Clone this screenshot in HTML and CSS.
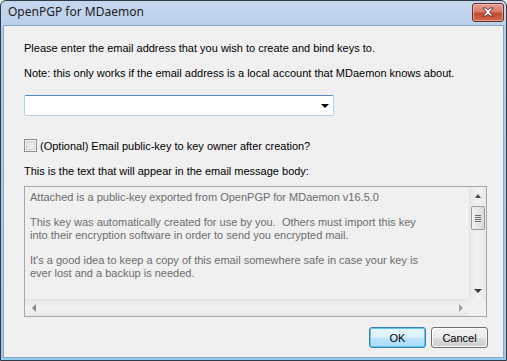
FILE: index.html
```html
<!DOCTYPE html>
<html>

<head>
	<title>OpenPGP for MDaemon</title>
	<meta charset=utf-8>
	<link rel="stylesheet" href="styles.css">
</head>

<body>
	<div class="window">
		<div class="titlebar">
			<div class="title">OpenPGP for MDaemon</div>
			<div class="close">
				<svg width="16" height="10" viewBox="0 0 16 10">
					<path d="M3 1 L6 1 L8 3 L10 1 L13 1 L9.5 5 L13 9 L10 9 L8 7 L6 9 L3 9 L6.5 5 Z" fill="#fff" stroke="#5a2219" stroke-width="0.8" stroke-linejoin="round" />
				</svg>
			</div>
		</div>
		<div class="client">
			<p class="line first">Please enter the email address that you wish to create and bind keys to.</p>
			<p class="line second">Note: this only works if the email address is a local account that MDaemon knows about.</p>
			<div class="combo">
				<div class="combo-arrow"></div>
			</div>
			<label class="check-row">
				<span class="checkbox"></span>
				<span>(Optional) Email public-key to key owner after creation?</span>
			</label>
			<p class="line body-label">This is the text that will appear in the email message body:</p>
			<div class="memo">
				<div class="memo-text">
					<div>Attached is a public-key exported from OpenPGP for MDaemon v16.5.0</div>
					<div>&nbsp;</div>
					<div>This key was automatically created for use by you.&nbsp; Others must import this key</div>
					<div>into their encryption software in order to send you encrypted mail.</div>
					<div>&nbsp;</div>
					<div>It's a good idea to keep a copy of this email somewhere safe in case your key is</div>
					<div>ever lost and a backup is needed.</div>
				</div>
				<div class="vscroll">
					<div class="sb-btn"><span class="tri up"></span></div>
					<div class="vtrack">
						<div class="thumb">
							<span></span><span></span><span></span><span></span>
						</div>
					</div>
					<div class="sb-btn"><span class="tri down"></span></div>
				</div>
				<div class="hscroll">
					<div class="sb-btn"><span class="tri left"></span></div>
					<div class="htrack"></div>
					<div class="sb-btn"><span class="tri right"></span></div>
				</div>
				<div class="corner"></div>
			</div>
			<div class="buttons">
				<button class="btn default">OK</button>
				<button class="btn">Cancel</button>
			</div>
		</div>
	</div>
</body>

</html>
```

FILE: styles.css
```css
body {
	margin: 0;
	background: #f0f0f0;
	font-family: "Liberation Sans", Arial, sans-serif;
	font-size: 11px;
	color: #000;
}

.window {
	width: 507px;
	height: 361px;
	box-sizing: border-box;
	border: 1px solid #2f3a48;
	border-radius: 6px 6px 0 0;
	background: linear-gradient(#c6d8ee, #b7cde7 30px, #a9c3e2);
	display: flex;
	flex-direction: column;
	padding: 0 2px 2px 2px;
	box-shadow: inset 0 -2px 0 #8fcdee;
}

.titlebar {
	height: 24px;
	display: flex;
	align-items: center;
	justify-content: space-between;
	padding: 0 0 0 5px;
	flex-shrink: 0;
}

.title {
	font-family: "Noto Sans", "Open Sans", sans-serif;
	font-size: 12px;
	color: #1b1b1b;
	margin-top: -4px;
}

.close {
	width: 30px;
	height: 17px;
	margin-top: -2px;
	border: 1px solid #6a2c24;
	border-radius: 3px;
	background: linear-gradient(#e6a193, #d57a66 45%, #c34a33 55%, #cf6a50);
	display: flex;
	align-items: center;
	justify-content: center;
	box-shadow: inset 0 0 0 1px rgba(255, 220, 210, 0.5);
}

.close svg {
	display: block;
}

.client {
	flex: 1;
	background: #f0f0f0;
	border: 1px solid #8aa6c8;
	padding: 0 15px 0 20px;
	display: flex;
	flex-direction: column;
}

.line {
	margin: 0;
	line-height: 13px;
	white-space: nowrap;
}

.first {
	margin-top: 16px;
}

.second {
	margin-top: 12px;
}

.combo {
	margin-top: 15px;
	width: 310px;
	height: 21px;
	box-sizing: border-box;
	background: #fff;
	border: 1px solid #b4d1ea;
	border-top-color: #5a8dbb;
	border-radius: 2px;
	position: relative;
}

.combo-arrow {
	position: absolute;
	right: 4px;
	top: 8px;
	border-left: 4px solid transparent;
	border-right: 4px solid transparent;
	border-top: 4px solid #000;
}

.check-row {
	margin-top: 23px;
	display: flex;
	align-items: center;
	gap: 3px;
	height: 13px;
}

.checkbox {
	width: 11px;
	height: 11px;
	border: 1px solid #8e8f8f;
	background: linear-gradient(135deg, #dcdcdc, #f7f7f7);
	box-shadow: inset 0 0 0 1px #f4f4f4, inset 0 0 0 2px #d2d2d2;
}

.body-label {
	margin-top: 13px;
}

.memo {
	margin-top: 8px;
	width: 463px;
	height: 131px;
	box-sizing: border-box;
	border: 1px solid #a8a8a8;
	display: grid;
	grid-template-columns: 1fr 17px;
	grid-template-rows: 1fr 17px;
	background: #f0f0f0;
}

.memo-text {
	padding: 4px 0 0 5px;
	color: #6d6d6d;
	line-height: 12.6px;
	white-space: nowrap;
	overflow: hidden;
}

.vscroll {
	display: flex;
	flex-direction: column;
	background: linear-gradient(90deg, #e8e8e8, #f2f2f2 50%, #e8e8e8);
	border-left: 1px solid #e4e4e4;
}

.hscroll {
	display: flex;
	background: linear-gradient(#e8e8e8, #f2f2f2 50%, #e8e8e8);
	border-top: 1px solid #e4e4e4;
}

.corner {
	background: #f0f0f0;
}

.sb-btn {
	width: 16px;
	height: 17px;
	display: flex;
	align-items: center;
	justify-content: center;
	flex-shrink: 0;
}

.hscroll .sb-btn {
	width: 17px;
	height: 16px;
}

.vtrack,
.htrack {
	flex: 1;
}

.vtrack {
	padding-top: 2px;
}

.thumb {
	margin: 0 1px;
	height: 24px;
	box-sizing: border-box;
	border: 1px solid #9a9a9a;
	border-radius: 2px;
	background: linear-gradient(90deg, #f3f3f3, #e6e6e6 50%, #d8d8d8);
	display: flex;
	flex-direction: column;
	align-items: center;
	justify-content: center;
	gap: 1px;
}

.thumb span {
	width: 6px;
	height: 1px;
	background: #6d6d6d;
}

.tri {
	width: 0;
	height: 0;
}

.tri.up {
	border-left: 3px solid transparent;
	border-right: 3px solid transparent;
	border-bottom: 4px solid #4a4a4a;
}

.tri.down {
	border-left: 4px solid transparent;
	border-right: 4px solid transparent;
	border-top: 4px solid #3a3a3a;
}

.tri.left {
	border-top: 4px solid transparent;
	border-bottom: 4px solid transparent;
	border-right: 4px solid #8a8a8a;
}

.tri.right {
	border-top: 4px solid transparent;
	border-bottom: 4px solid transparent;
	border-left: 4px solid #a0a0a0;
}

.buttons {
	margin-top: 10px;
	width: 464px;
	display: flex;
	justify-content: flex-end;
	gap: 5px;
}

.btn {
	width: 57px;
	height: 21px;
	padding: 0;
	font-family: "Liberation Sans", Arial, sans-serif;
	font-size: 11px;
	color: #000;
	border: 1px solid #707070;
	border-radius: 3px;
	background: linear-gradient(#f2f2f2, #ebebeb 50%, #dddddd 50%, #cfcfcf);
	box-shadow: inset 0 0 0 1px #fcfcfc;
}

.btn.default {
	border-color: #3c7fb1;
	background: linear-gradient(#eaf6fd, #d9f0fc 50%, #bee6fd 50%, #a7d9f5);
	box-shadow: inset 0 0 0 1px #5ec7ef;
}
```
